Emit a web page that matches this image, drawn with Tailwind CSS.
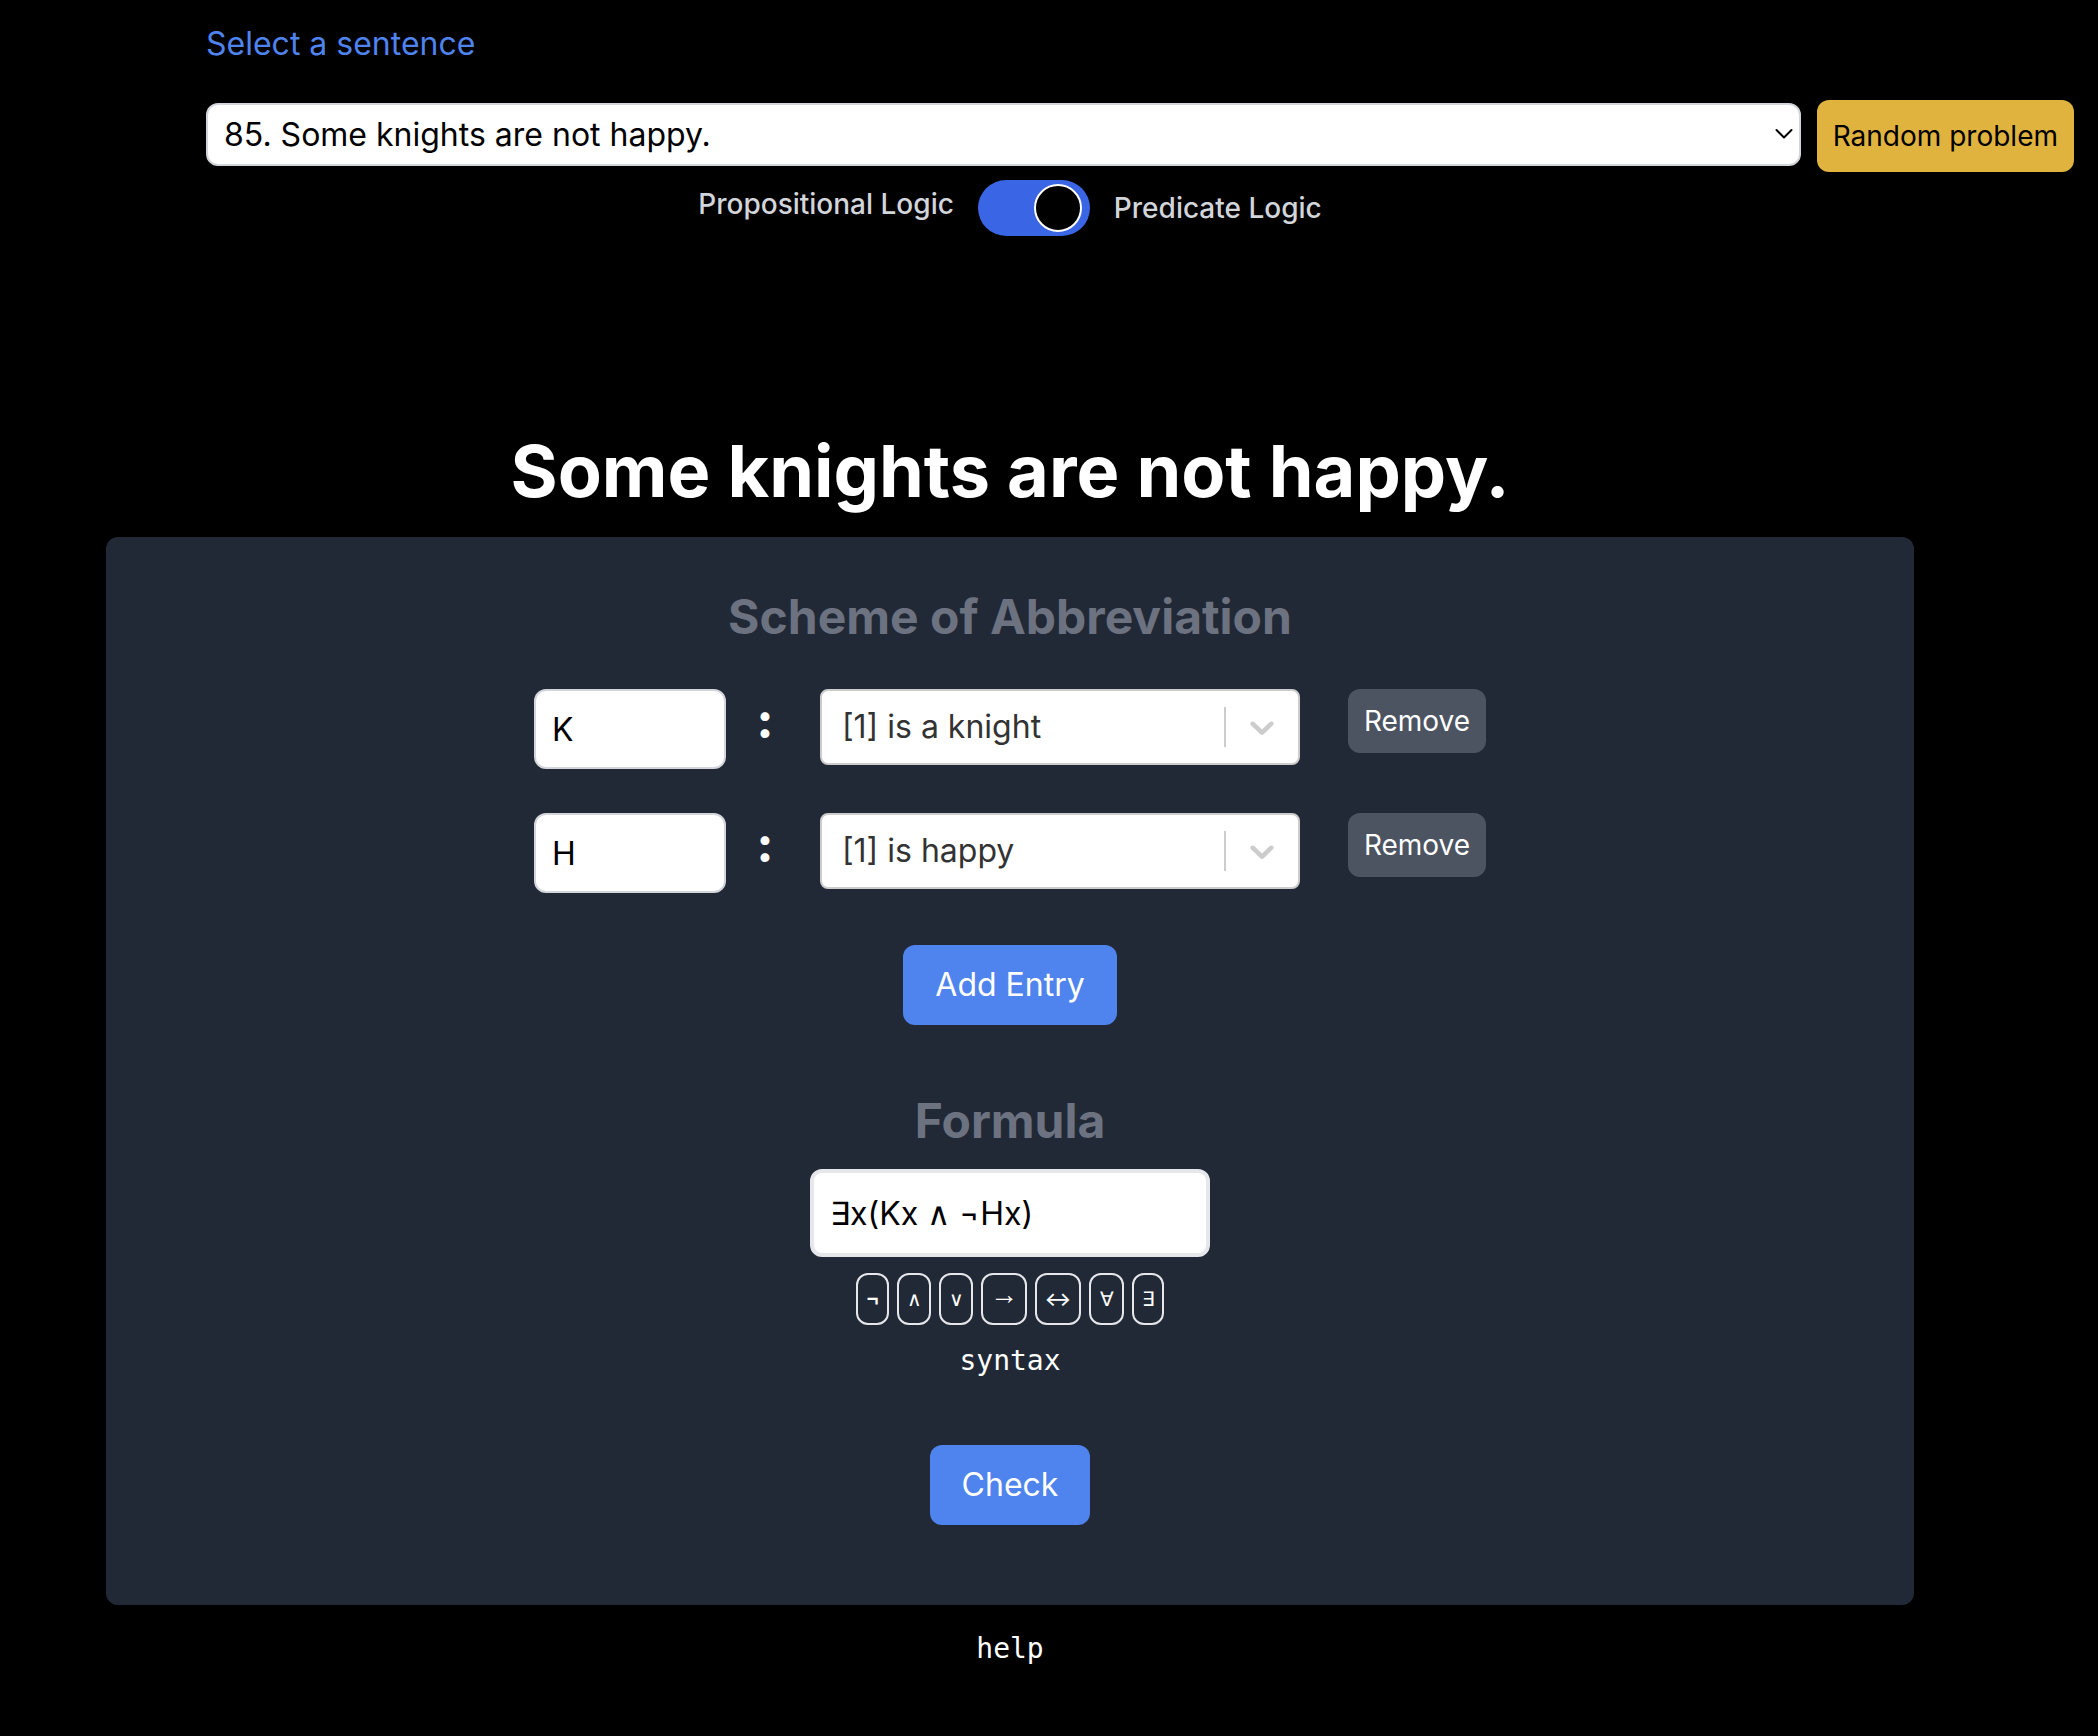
<!DOCTYPE html>
<html lang="en">
<head>
<meta charset="utf-8">
<title>Some knights are not happy.</title>
<meta name="viewport" content="width=device-width, initial-scale=1">
<script src="https://cdn.jsdelivr.net/npm/@tailwindcss/browser@4"></script>
</head>
<body class="min-h-screen bg-black font-['Inter',sans-serif] text-[32px] leading-[48px] text-white">
  <header class="flex flex-col pt-5 pr-6 pl-[206px]">
    <label for="sentence" class="self-start text-[#4f83ed]">Select a sentence</label>
    <div class="mt-8 flex items-start gap-4">
      <div class="relative mt-[3px] flex-1">
        <select id="sentence" class="block h-[63px] w-full appearance-none rounded-xl border-2 border-[#d2d5da] bg-white px-4 text-black">
          <option>85. Some knights are not happy.</option>
        </select>
        <svg class="pointer-events-none absolute top-[25px] right-2 h-3 w-[18px]" viewBox="0 0 18 12" fill="none" stroke="#000" stroke-width="2" stroke-linecap="round" stroke-linejoin="round"><path d="M1.5 2 9 9.500 16.500 2"/></svg>
      </div>
      <button type="button" class="h-[72px] rounded-xl bg-[#e0b33f] px-4 text-[28px] text-black">Random problem</button>
    </div>
  </header>

  <main class="flex flex-col items-center pr-[78px]">
    <div class="mt-2 flex items-start gap-6 text-[28px] leading-10 font-medium text-[#d2d5da]">
      <span class="mt-1">Propositional Logic</span>
      <div class="relative flex">
        <input id="logic" type="checkbox" checked class="peer h-14 w-28 appearance-none rounded-full bg-[#4d5461] checked:bg-[#3a65e4]">
        <span class="pointer-events-none absolute top-1 left-2 size-12 rounded-full border-2 border-white bg-black peer-checked:translate-x-full"></span>
      </div>
      <label for="logic" class="mt-2">Predicate Logic</label>
    </div>

    <h1 class="mt-[195px] text-[72px] leading-[80px] font-bold">Some knights are not happy.</h1>

    <section class="mt-[26px] flex w-full flex-col items-center px-[106px]">
      <div class="flex w-full flex-col items-center rounded-xl bg-[#222936] pt-[52px] pb-20">
        <h2 class="text-[48px] leading-[56px] font-bold text-[#6c7280]">Scheme of Abbreviation</h2>

        <div class="mt-11 flex flex-col gap-11">
          <div class="flex items-start">
            <input type="text" value="K" aria-label="Symbol 1" class="h-20 w-48 rounded-xl border-2 border-[#d2d5da] bg-white px-4 text-black">
            <span class="w-[94px] pt-1 pr-4 text-center text-[48px] leading-[56px] font-extrabold">:</span>
            <div class="relative w-[480px]">
              <select aria-label="Meaning 1" class="block h-[76px] w-full appearance-none rounded-lg border-2 border-[#cccccc] bg-white px-5 text-[#333333]"><option>[1] is a knight</option></select>
              <div class="pointer-events-none absolute inset-y-[18px] right-[18px] flex items-center gap-4">
                <span class="h-full w-[2px] bg-[#cccccc]"></span>
                <svg class="size-10" viewBox="0 0 20 20" fill="#cccccc"><path d="M4.516 7.548c0.436-0.446 1.043-0.481 1.576 0l3.908 3.747 3.908-3.747c0.533-0.481 1.141-0.446 1.574 0 0.436 0.445 0.408 1.197 0 1.615-0.406 0.418-4.695 4.502-4.695 4.502-0.217 0.223-0.502 0.335-0.787 0.335s-0.570-0.112-0.789-0.335c0 0-4.287-4.084-4.695-4.502s-0.436-1.170 0-1.615z"/></svg>
              </div>
            </div>
            <button type="button" class="ml-12 h-16 rounded-xl bg-[#4d5461] px-4 text-[28px] leading-10">Remove</button>
          </div>
          <div class="flex items-start">
            <input type="text" value="H" aria-label="Symbol 2" class="h-20 w-48 rounded-xl border-2 border-[#d2d5da] bg-white px-4 text-black">
            <span class="w-[94px] pt-1 pr-4 text-center text-[48px] leading-[56px] font-extrabold">:</span>
            <div class="relative w-[480px]">
              <select aria-label="Meaning 2" class="block h-[76px] w-full appearance-none rounded-lg border-2 border-[#cccccc] bg-white px-5 text-[#333333]"><option>[1] is happy</option></select>
              <div class="pointer-events-none absolute inset-y-[18px] right-[18px] flex items-center gap-4">
                <span class="h-full w-[2px] bg-[#cccccc]"></span>
                <svg class="size-10" viewBox="0 0 20 20" fill="#cccccc"><path d="M4.516 7.548c0.436-0.446 1.043-0.481 1.576 0l3.908 3.747 3.908-3.747c0.533-0.481 1.141-0.446 1.574 0 0.436 0.445 0.408 1.197 0 1.615-0.406 0.418-4.695 4.502-4.695 4.502-0.217 0.223-0.502 0.335-0.787 0.335s-0.570-0.112-0.789-0.335c0 0-4.287-4.084-4.695-4.502s-0.436-1.170 0-1.615z"/></svg>
              </div>
            </div>
            <button type="button" class="ml-12 h-16 rounded-xl bg-[#4d5461] px-4 text-[28px] leading-10">Remove</button>
          </div>
        </div>

        <button type="button" class="mt-[52px] h-20 rounded-xl bg-[#4f83ed] px-8">Add Entry</button>

        <h2 class="mt-[68px] text-[48px] leading-[56px] font-bold text-[#6c7280]"><label for="formula">Formula</label></h2>
        <input id="formula" type="text" value="∃x(Kx ∧ ¬Hx)" class="mt-5 h-[88px] w-[400px] rounded-xl border-4 border-[#e5e7eb] bg-white px-4 text-black">
        <div class="mt-4 flex gap-2 text-[20px] leading-8 font-medium">
          <button type="button" class="h-[52px] w-[33px] rounded-xl border-2 border-[#e5e7eb] font-['Liberation_Sans',sans-serif] font-bold">¬</button>
          <button type="button" class="h-[52px] w-[34px] rounded-xl border-2 border-[#e5e7eb]">∧</button>
          <button type="button" class="h-[52px] w-[34px] rounded-xl border-2 border-[#e5e7eb]">∨</button>
          <button type="button" class="flex h-[52px] w-[46px] items-center justify-center rounded-xl border-2 border-[#e5e7eb] pb-2 font-['Liberation_Sans',sans-serif] text-[28px]">→</button>
          <button type="button" class="h-[52px] w-[46px] rounded-xl border-2 border-[#e5e7eb]">↔</button>
          <button type="button" class="h-[52px] w-[35px] rounded-xl border-2 border-[#e5e7eb]">∀</button>
          <button type="button" class="h-[52px] w-[32px] rounded-xl border-2 border-[#e5e7eb]">∃</button>
        </div>
        <a href="#syntax" class="mt-4 font-['DejaVu_Sans_Mono',monospace] text-[28px] leading-10">syntax</a>
        <button type="button" class="mt-16 h-20 rounded-xl bg-[#4f83ed] px-8">Check</button>
      </div>
      <a href="#help" class="mt-6 font-['DejaVu_Sans_Mono',monospace] text-[28px] leading-10">help</a>
    </section>
  </main>
</body>
</html>
